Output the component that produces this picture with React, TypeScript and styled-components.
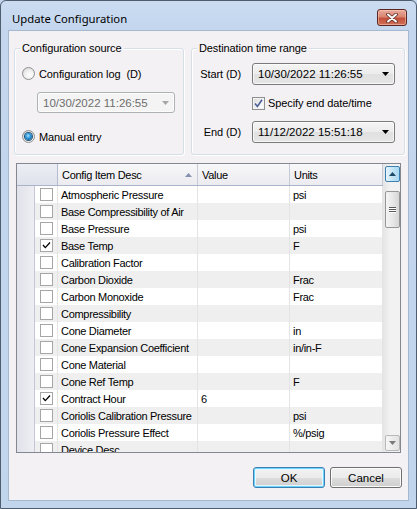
import styled, { createGlobalStyle } from "styled-components"

interface ConfigItem {
  desc: string
  value: string
  units: string
  checked: boolean
}

const items: ConfigItem[] = [
  { desc: "Atmospheric Pressure", value: "", units: "psi", checked: false },
  { desc: "Base Compressibility of Air", value: "", units: "", checked: false },
  { desc: "Base Pressure", value: "", units: "psi", checked: false },
  { desc: "Base Temp", value: "", units: "F", checked: true },
  { desc: "Calibration Factor", value: "", units: "", checked: false },
  { desc: "Carbon Dioxide", value: "", units: "Frac", checked: false },
  { desc: "Carbon Monoxide", value: "", units: "Frac", checked: false },
  { desc: "Compressibility", value: "", units: "", checked: false },
  { desc: "Cone Diameter", value: "", units: "in", checked: false },
  { desc: "Cone Expansion Coefficient", value: "", units: "in/in-F", checked: false },
  { desc: "Cone Material", value: "", units: "", checked: false },
  { desc: "Cone Ref Temp", value: "", units: "F", checked: false },
  { desc: "Contract Hour", value: "6", units: "", checked: true },
  { desc: "Coriolis Calibration Pressure", value: "", units: "psi", checked: false },
  { desc: "Coriolis Pressure Effect", value: "", units: "%/psig", checked: false },
  { desc: "Device Desc", value: "", units: "", checked: false },
]

const COLUMNS = "18px 23px 140px 92px 93px"

const GlobalStyle = createGlobalStyle`
  html, body {
    margin: 0;
    padding: 0;
  }
  body {
    font-family: "Liberation Sans", Arial, sans-serif;
    font-size: 11px;
    letter-spacing: -0.1px;
    color: #000;
    background: #c3d6ee;
  }
`

const Window = styled.div`
  box-sizing: border-box;
  width: 417px;
  height: 509px;
  display: flex;
  flex-direction: column;
  border: 1px solid #4e5d70;
  border-radius: 6px 6px 0 0;
  background: linear-gradient(to bottom, #cbdcf1 0, #c3d6ee 30px, #c1d5ed 100%);
  padding: 0 7px 7px 7px;
`

const TitleBar = styled.div`
  height: 29px;
  display: flex;
  align-items: flex-start;
`

const Title = styled.div`
  font-family: "Noto Sans", "Liberation Sans", sans-serif;
  font-size: 11.3px;
  letter-spacing: 0;
  line-height: 29px;
  padding: 3px 0 0 4px;
  color: #000;
`

const CloseButton = styled.div`
  box-sizing: border-box;
  margin: 8px 2px 0 auto;
  width: 30px;
  height: 17px;
  border: 1px solid #5c2620;
  border-radius: 3px;
  background: linear-gradient(to bottom, #e9ab9c 0%, #d98571 45%, #c4503a 55%, #d0705a 100%);
  box-shadow: inset 0 0 0 1px rgba(255, 210, 200, 0.5);
  display: flex;
  align-items: center;
  justify-content: center;
`

const Client = styled.div`
  flex: 1;
  display: flex;
  flex-direction: column;
  border: 1px solid #a4b8d0;
  background: #f4f1f4;
  padding: 17px 3px 0 5px;
`

const GroupRow = styled.div`
  display: flex;
  gap: 7px;
`

const GroupBox = styled.div<{ $width: number }>`
  box-sizing: border-box;
  width: ${({ $width }) => $width}px;
  height: 107px;
  border: 1px solid #d5dfe5;
  border-radius: 3px;
  box-shadow: inset 1px 1px 0 #fff, 1px 1px 0 #fff;
  display: flex;
  flex-direction: column;
`

const GroupTitle = styled.div`
  align-self: flex-start;
  margin: -7px 0 0 5px;
  padding: 0 2px;
  line-height: 13px;
  background: #f4f1f4;
`

const OptionRow = styled.label<{ $top: number }>`
  display: flex;
  align-items: center;
  gap: 4px;
  height: 13px;
  margin: ${({ $top }) => $top}px 0 0 7px;
  white-space: pre;
`

const Radio = styled.span<{ $on?: boolean }>`
  box-sizing: border-box;
  width: 13px;
  height: 13px;
  border-radius: 50%;
  border: 1px solid #8e8f8f;
  background: radial-gradient(circle at 60% 65%, #ffffff 0%, #f0f0f0 45%, #cfcfcf 100%);
  display: flex;
  align-items: center;
  justify-content: center;
  &::after {
    content: "";
    display: ${({ $on }) => ($on ? "block" : "none")};
    width: 7px;
    height: 7px;
    border-radius: 50%;
    background: radial-gradient(circle at 45% 40%, #9ee2ff 0%, #2a92d6 45%, #0b3f6d 100%);
    box-shadow: 0 0 0 1px #1d4f75;
  }
`

const Combo = styled.div<{ $disabled?: boolean }>`
  box-sizing: border-box;
  height: 21px;
  display: flex;
  align-items: center;
  padding: 0 5px;
  border: 1px solid ${({ $disabled }) => ($disabled ? "#adb2b5" : "#7a7a7a")};
  border-radius: 3px;
  color: ${({ $disabled }) => ($disabled ? "#6d6d6d" : "#000")};
  background: ${({ $disabled }) =>
    $disabled
      ? "#f4f4f4"
      : "linear-gradient(to bottom, #f4f4f4 0%, #ececec 50%, #e0e0e0 51%, #e6e6e6 100%)"};
  box-shadow: inset 0 0 0 1px rgba(255, 255, 255, 0.7);
`

const LogCombo = styled(Combo)`
  width: 138px;
  margin: 12px 0 0 22px;
`

const ComboText = styled.span`
  flex: 1;
  font-size: 11.5px;
  letter-spacing: 0;
  white-space: nowrap;
`

const FormGrid = styled.div`
  display: grid;
  grid-template-columns: 42px 143px;
  grid-template-rows: 22px 36px 22px;
  column-gap: 11px;
  align-items: center;
  margin: 8px 0 0 7px;
`

const FieldLabel = styled.span`
  text-align: right;
  white-space: nowrap;
`

const FieldCombo = styled(Combo)`
  height: 22px;
`

const CheckRow = styled.label`
  grid-column: 2;
  display: flex;
  align-items: center;
  gap: 3px;
  white-space: nowrap;
`

const CheckBox = styled.span`
  box-sizing: border-box;
  width: 13px;
  height: 13px;
  border: 1px solid #8e8f8f;
  background: linear-gradient(135deg, #d8d8d8 0%, #f4f4f4 60%, #ffffff 100%);
  box-shadow: inset 0 0 0 1px #f4f4f4;
  display: flex;
  align-items: center;
  justify-content: center;
`

const DataGrid = styled.div`
  box-sizing: border-box;
  height: 290px;
  margin: 8px 4px 0 2px;
  border: 1px solid #828790;
  background: #fff;
  display: flex;
`

const TableArea = styled.div`
  flex: 1;
  overflow: hidden;
`

const HeaderRow = styled.div`
  display: grid;
  grid-template-columns: ${COLUMNS};
  height: 22px;
  border-bottom: 1px solid #a9b3c9;
  box-sizing: border-box;
`

const HeaderCell = styled.div<{ $corner?: boolean }>`
  grid-column: ${({ $corner }) => ($corner ? "span 2" : "auto")};
  display: flex;
  align-items: center;
  padding: 0 4px;
  border-right: 1px solid ${({ $corner }) => ($corner ? "#b5bccf" : "#c6cbd8")};
  background: ${({ $corner }) =>
    $corner
      ? "linear-gradient(to bottom, #eceef4, #dfe2ec)"
      : "linear-gradient(to bottom, #f8f8fa, #ebebf0)"};
  letter-spacing: -0.3px;
  overflow: hidden;
  white-space: nowrap;
`

const SortArrow = styled.svg`
  margin-left: auto;
  margin-right: 1px;
`

const Row = styled.div<{ $alt: boolean }>`
  display: grid;
  grid-template-columns: ${COLUMNS};
  height: 17px;
  background: ${({ $alt }) => ($alt ? "#efefef" : "#fff")};
`

const RowHeader = styled.div`
  border-right: 1px solid #c3c7d6;
  background: linear-gradient(to right, #e1e2ea, #eeeef3);
`

const Cell = styled.div<{ $center?: boolean }>`
  display: flex;
  align-items: center;
  justify-content: ${({ $center }) => ($center ? "center" : "flex-start")};
  padding: 0 3px;
  border-right: 1px solid #e4e4e4;
  letter-spacing: -0.3px;
  white-space: nowrap;
  overflow: hidden;
`

const GridCheck = styled.span`
  box-sizing: border-box;
  width: 13px;
  height: 13px;
  border: 1px solid #a6a6a6;
  background: #fff;
  display: flex;
  align-items: center;
  justify-content: center;
`

const ScrollBar = styled.div`
  width: 17px;
  display: flex;
  flex-direction: column;
  align-items: center;
  padding: 2px 0 1px;
  box-sizing: border-box;
  background: linear-gradient(to right, #e6e6e6, #f2f2f2 40%, #f2f2f2);
  border-left: 1px solid #e6e6e6;
`

const ScrollButton = styled.div<{ $hot?: boolean }>`
  box-sizing: border-box;
  width: 15px;
  height: 16px;
  border: 1px solid ${({ $hot }) => ($hot ? "#3c7fb1" : "#b8b8b8")};
  border-radius: 2px;
  background: ${({ $hot }) =>
    $hot
      ? "linear-gradient(to right, #e5f4fc, #c4e5f6 50%, #a9d7f1)"
      : "linear-gradient(to right, #f6f6f6, #e2e2e2)"};
  display: flex;
  align-items: center;
  justify-content: center;
`

const DownButton = styled(ScrollButton)`
  margin-top: auto;
`

const Thumb = styled.div`
  box-sizing: border-box;
  margin-top: 9px;
  width: 15px;
  height: 37px;
  border: 1px solid #969696;
  border-radius: 2px;
  background: linear-gradient(to right, #f4f4f4, #e8e8e8 50%, #d6d6d6);
  display: flex;
  flex-direction: column;
  align-items: center;
  justify-content: center;
  gap: 1px;
`

const Grip = styled.span`
  width: 7px;
  height: 1px;
  background: #5a5a5a;
  box-shadow: 0 1px 0 #fff;
`

const ButtonRow = styled.div`
  display: flex;
  justify-content: flex-end;
  gap: 5px;
  margin-top: 14px;
  padding-right: 3px;
`

const DialogButton = styled.button<{ $default?: boolean }>`
  box-sizing: border-box;
  width: 72px;
  height: 21px;
  padding: 0;
  font-family: "Liberation Sans", Arial, sans-serif;
  font-size: 11.5px;
  color: #000;
  border: 1px solid ${({ $default }) => ($default ? "#3c7fb1" : "#707070")};
  border-radius: 3px;
  background: linear-gradient(to bottom, #f2f2f2 0%, #ebebeb 50%, #dddddd 51%, #cfcfcf 100%);
  box-shadow: ${({ $default }) =>
    $default ? "inset 0 0 0 1px #6cd4ff, inset 0 0 0 2px #e8f6fd" : "inset 0 0 0 1px #fbfbfb"};
`

const DownArrow = ({ color }: { color: string }) => (
  <svg width="7" height="4" viewBox="0 0 7 4">
    <path d="M0 0 H7 L3.5 4 Z" fill={color} />
  </svg>
)

const App = () => {
  return (
    <>
      <GlobalStyle />
      <Window>
        <TitleBar>
          <Title>Update Configuration</Title>
          <CloseButton>
            <svg width="12" height="10" viewBox="0 0 12 10">
              <path d="M2 1.5 L10 8.5 M10 1.5 L2 8.5" stroke="#5a2a24" strokeWidth="3.6" strokeLinecap="round" />
              <path d="M2 1.5 L10 8.5 M10 1.5 L2 8.5" stroke="#fff" strokeWidth="2" strokeLinecap="round" />
            </svg>
          </CloseButton>
        </TitleBar>
        <Client>
          <GroupRow>
            <GroupBox $width={170}>
              <GroupTitle>Configuration source</GroupTitle>
              <OptionRow $top={12}>
                <Radio />
                <span>Configuration log  (D)</span>
              </OptionRow>
              <LogCombo $disabled>
                <ComboText>10/30/2022 11:26:55</ComboText>
                <DownArrow color="#a6a6a6" />
              </LogCombo>
              <OptionRow $top={17}>
                <Radio $on />
                <span>Manual entry</span>
              </OptionRow>
            </GroupBox>
            <GroupBox $width={214}>
              <GroupTitle>Destination time range</GroupTitle>
              <FormGrid>
                <FieldLabel>Start (D)</FieldLabel>
                <FieldCombo>
                  <ComboText>10/30/2022 11:26:55</ComboText>
                  <DownArrow color="#000" />
                </FieldCombo>
                <CheckRow>
                  <CheckBox>
                    <svg width="9" height="9" viewBox="0 0 9 9">
                      <path d="M1 4.5 L3.4 7.5 L8 0.8" stroke="#4a5f97" strokeWidth="1.6" fill="none" />
                    </svg>
                  </CheckBox>
                  <span>Specify end date/time</span>
                </CheckRow>
                <FieldLabel>End (D)</FieldLabel>
                <FieldCombo>
                  <ComboText>11/12/2022 15:51:18</ComboText>
                  <DownArrow color="#000" />
                </FieldCombo>
              </FormGrid>
            </GroupBox>
          </GroupRow>

          <DataGrid>
            <TableArea>
              <HeaderRow>
                <HeaderCell $corner />
                <HeaderCell>
                  Config Item Desc
                  <SortArrow width="7" height="4" viewBox="0 0 7 4">
                    <path d="M0 4 H7 L3.5 0 Z" fill="#8592ad" />
                  </SortArrow>
                </HeaderCell>
                <HeaderCell>Value</HeaderCell>
                <HeaderCell>Units</HeaderCell>
              </HeaderRow>
              {items.map((item, i) => (
                <Row key={item.desc} $alt={i % 2 === 1}>
                  <RowHeader />
                  <Cell $center>
                    <GridCheck>
                      {item.checked && (
                        <svg width="9" height="9" viewBox="0 0 9 9">
                          <path d="M1 4 L3.3 6.6 L8 1.5" stroke="#000" strokeWidth="1.3" fill="none" />
                        </svg>
                      )}
                    </GridCheck>
                  </Cell>
                  <Cell>{item.desc}</Cell>
                  <Cell>{item.value}</Cell>
                  <Cell>{item.units}</Cell>
                </Row>
              ))}
            </TableArea>
            <ScrollBar>
              <ScrollButton $hot>
                <svg width="7" height="4" viewBox="0 0 7 4">
                  <path d="M0 4 H7 L3.5 0 Z" fill="#1c4966" />
                </svg>
              </ScrollButton>
              <Thumb>
                <Grip />
                <Grip />
                <Grip />
              </Thumb>
              <DownButton>
                <DownArrow color="#7a7a7a" />
              </DownButton>
            </ScrollBar>
          </DataGrid>

          <ButtonRow>
            <DialogButton $default>OK</DialogButton>
            <DialogButton>Cancel</DialogButton>
          </ButtonRow>
        </Client>
      </Window>
    </>
  )
}

export default App
